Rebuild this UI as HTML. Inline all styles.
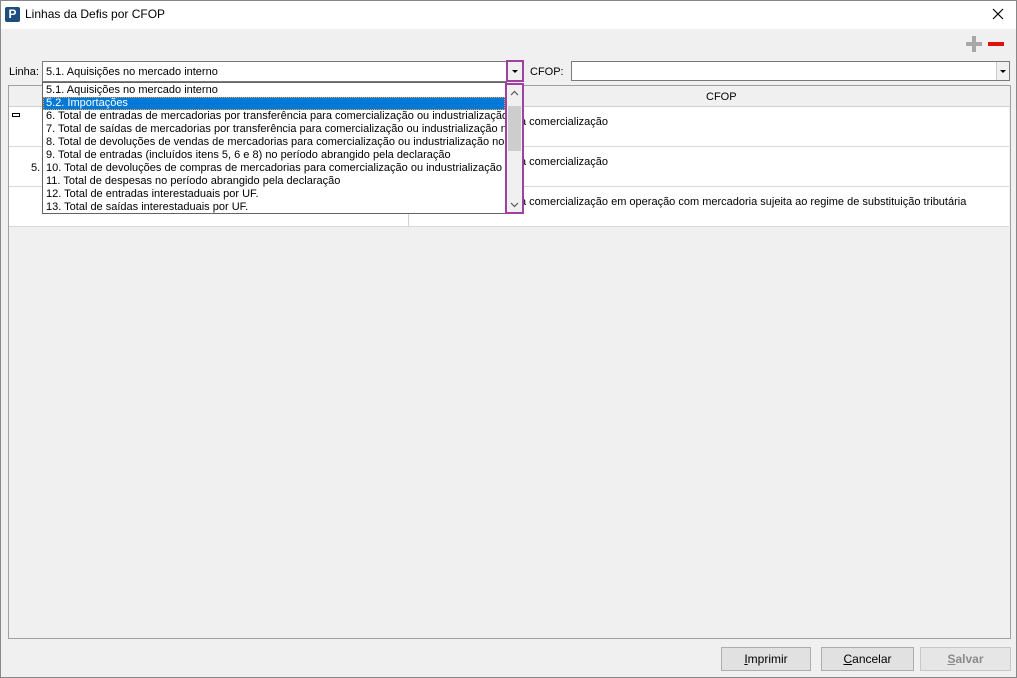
<!DOCTYPE html>
<html><head><meta charset="utf-8"><style>
*{box-sizing:border-box;margin:0;padding:0}
body{width:1017px;height:678px;background:#f0f0f0;font-family:Tahoma,"Liberation Sans",sans-serif;font-size:11px;color:#000;position:relative;overflow:hidden}
.abs{position:absolute}
.win{left:0;top:0;width:1017px;height:678px;border:1px solid #888}
.title{left:1px;top:1px;width:1015px;height:28px;background:#fff}
.row{left:9px;width:1000px;height:40px;background:#fff;border-bottom:1px solid #d8d8d8}
.item{position:absolute;left:0;height:13px;line-height:13px;padding-left:3px;white-space:nowrap;width:462px;overflow:hidden}
.btn{top:647px;height:24px;border:1px solid #adadad;background:#e1e1e1;text-align:center;line-height:22px;font-size:12px}
</style></head><body>
<div class="abs win"></div>
<div class="abs title"></div>
<div class="abs" style="left:5px;top:7px;width:15px;height:15px;background:#1d4f7c;border-radius:2px;color:#fff;font-weight:bold;font-size:12px;line-height:15px;text-align:center">P</div>
<div class="abs" style="left:25px;top:7px;font-size:12px">Linhas da Defis por CFOP</div>
<svg class="abs" style="left:992px;top:8px" width="12" height="12"><path d="M1 1L11 11M11 1L1 11" stroke="#000" stroke-width="1.2"/></svg>
<!-- + - -->
<div class="abs" style="left:966px;top:42px;width:16px;height:4px;background:#a8a8a8"></div>
<div class="abs" style="left:972px;top:36px;width:4px;height:16px;background:#a8a8a8"></div>
<div class="abs" style="left:988px;top:42px;width:16px;height:4px;background:#e01010"></div>
<!-- Linha combo -->
<div class="abs" style="left:9px;top:66px">Linha:</div>
<div class="abs" style="left:42px;top:61px;width:481px;height:21px;background:#fff;border:1px solid #7a7a7a"></div>
<div class="abs" style="left:46px;top:66px">5.1. Aquisições no mercado interno</div>
<div class="abs" style="left:506px;top:60px;width:18px;height:22px;border:2px solid #a040a0;background:#f0f0f0"></div>
<div class="abs" style="left:512px;top:70px;width:0;height:0;border-left:3px solid transparent;border-right:3px solid transparent;border-top:3px solid #000"></div>
<div class="abs" style="left:530px;top:66px">CFOP:</div>
<div class="abs" style="left:571px;top:61px;width:439px;height:20px;background:#fff;border:1px solid #7a7a7a"></div>
<div class="abs" style="left:996px;top:62px;width:13px;height:18px;background:#f0f0f0;border-left:1px solid #ccc"></div>
<div class="abs" style="left:1000px;top:70px;width:0;height:0;border-left:3px solid transparent;border-right:3px solid transparent;border-top:3px solid #000"></div>
<!-- grid -->
<div class="abs" style="left:8px;top:85px;width:1003px;height:554px;border:1px solid #a0a0a0;background:#f0f0f0"></div>
<div class="abs" style="left:9px;top:86px;width:1001px;height:21px;background:#f0f0f0;border-bottom:1px solid #d0d0d0"></div>
<div class="abs" style="left:706px;top:91px">CFOP</div>
<div class="abs row" style="top:107px"></div>
<div class="abs row" style="top:147px"></div>
<div class="abs row" style="top:187px"></div>
<div class="abs" style="left:408px;top:86px;width:1px;height:141px;background:#d0d0d0"></div>
<div class="abs" style="left:12px;top:113px;width:8px;height:4px;border:1px solid #000"></div>
<div class="abs" style="left:31px;top:162px">5.</div>
<div class="abs" style="left:520px;top:116px">a comercialização</div>
<div class="abs" style="left:520px;top:156px">a comercialização</div>
<div class="abs" style="left:520px;top:196px">a comercialização em operação com mercadoria sujeita ao regime de substituição tributária</div>
<!-- dropdown list -->
<div class="abs" style="left:42px;top:82px;width:465px;height:132px;background:#fff;border:1px solid #646464">
<div class="item" style="top:1px">5.1. Aquisições no mercado interno</div>
<div class="item" style="top:14px;background:#0078d7;color:#fff;outline:1px dotted #f0a040;outline-offset:-1px">5.2. Importações</div>
<div class="item" style="top:27px">6. Total de entradas de mercadorias por transferência para comercialização ou industrialização no</div>
<div class="item" style="top:40px">7. Total de saídas de mercadorias por transferência para comercialização ou industrialização no pe</div>
<div class="item" style="top:53px">8. Total de devoluções de vendas de mercadorias para comercialização ou industrialização no pe</div>
<div class="item" style="top:66px">9. Total de entradas (incluídos itens 5, 6 e 8) no período abrangido pela declaração</div>
<div class="item" style="top:79px">10. Total de devoluções de compras de mercadorias para comercialização ou industrialização no</div>
<div class="item" style="top:92px">11. Total de despesas no período abrangido pela declaração</div>
<div class="item" style="top:105px">12. Total de entradas interestaduais por UF.</div>
<div class="item" style="top:118px">13. Total de saídas interestaduais por UF.</div>
</div>
<div class="abs" style="left:505px;top:83px;width:19px;height:131px;border:2px solid #a040a0;background:#f0f0f0"></div>
<div class="abs" style="left:508px;top:106px;width:13px;height:45px;background:#cdcdcd"></div>
<svg class="abs" style="left:510px;top:90px" width="9" height="6"><path d="M1 5L4.5 1.5L8 5" stroke="#555" fill="none" stroke-width="1.2"/></svg>
<svg class="abs" style="left:510px;top:202px" width="9" height="6"><path d="M1 1L4.5 4.5L8 1" stroke="#555" fill="none" stroke-width="1.2"/></svg>
<!-- buttons -->
<div class="abs btn" style="left:721px;width:90px"><u>I</u>mprimir</div>
<div class="abs btn" style="left:821px;width:93px"><u>C</u>ancelar</div>
<div class="abs btn" style="left:920px;width:91px;color:#8a8a8a;font-weight:bold;background:#e6e6e6;border-color:#c8c8c8"><u>S</u>alvar</div>
</body></html>
